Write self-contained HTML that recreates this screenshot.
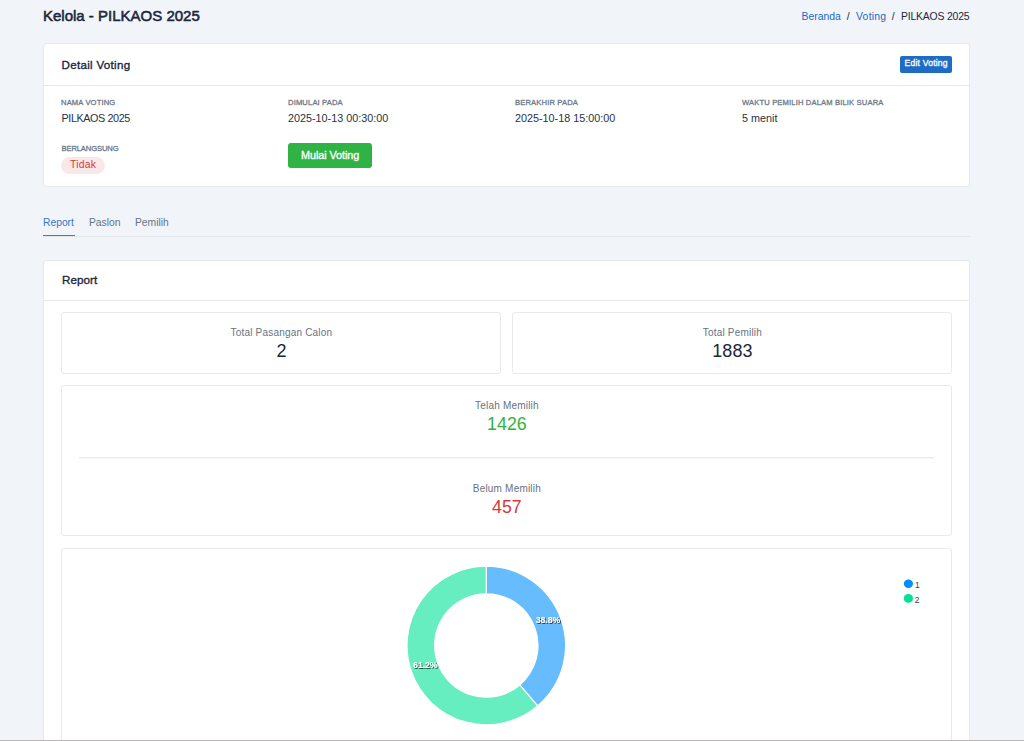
<!DOCTYPE html>
<html>
<head>
<meta charset="utf-8">
<style>
html,body{margin:0;padding:0;}
body{width:1024px;height:741px;overflow:hidden;background:#f1f4f9;font-family:"Liberation Sans",sans-serif;color:#1d273b;position:relative;}
.a{position:absolute;white-space:nowrap;line-height:1;}
.card{position:absolute;background:#fff;border:1px solid #e8e9ec;border-radius:3px;box-sizing:border-box;}
.hline{position:absolute;height:1px;background:#e9eaed;}
.dt{font-size:7.6px;font-weight:normal;-webkit-text-stroke:0.3px #6e7a8a;letter-spacing:0.15px;color:#6e7a8a;text-transform:uppercase;}
.dv{font-size:10.8px;color:#283244;}
.sub{font-size:10px;color:#667382;letter-spacing:0.2px;}
</style>
</head>
<body>
<!-- page header -->
<div class="a" style="left:43px;top:8.4px;font-size:15px;font-weight:normal;-webkit-text-stroke:0.55px #1d273b;color:#1d273b;letter-spacing:0px;">Kelola - PILKAOS 2025</div>
<div class="a" style="left:801.5px;top:12px;font-size:10.4px;color:#206bc4;">Beranda</div>
<div class="a" style="left:846.8px;top:12px;font-size:10.4px;color:#1d273b;">/</div>
<div class="a" style="left:856px;top:12px;font-size:10.4px;color:#206bc4;letter-spacing:0.25px;">Voting</div>
<div class="a" style="left:891.8px;top:12px;font-size:10.4px;color:#1d273b;">/</div>
<div class="a" style="left:901px;top:12px;font-size:10.4px;color:#1d273b;letter-spacing:-0.17px;">PILKAOS 2025</div>

<!-- Detail card -->
<div class="card" style="left:43px;top:43px;width:927px;height:144px;"></div>
<div class="hline" style="left:44px;top:85px;width:925px;"></div>
<div class="a" style="left:61.5px;top:59px;font-size:11.6px;font-weight:normal;-webkit-text-stroke:0.35px #1d273b;letter-spacing:0.3px;color:#1d273b;">Detail Voting</div>
<div class="a" style="left:900px;top:56px;width:52px;height:17px;background:#206bc4;border-radius:2px;"></div>
<div class="a" style="left:904.5px;top:59.3px;font-size:8.6px;font-weight:normal;-webkit-text-stroke:0.3px #fff;color:#fff;letter-spacing:0.2px;">Edit Voting</div>

<div class="a dt" style="left:61px;top:98.5px;">Nama Voting</div>
<div class="a dv" style="left:61.5px;top:112.5px;letter-spacing:-0.4px;">PILKAOS 2025</div>
<div class="a dt" style="left:288px;top:98.5px;">Dimulai Pada</div>
<div class="a dv" style="left:288px;top:112.6px;">2025-10-13 00:30:00</div>
<div class="a dt" style="left:515px;top:98.5px;">Berakhir Pada</div>
<div class="a dv" style="left:515px;top:112.6px;">2025-10-18 15:00:00</div>
<div class="a dt" style="left:742px;top:98.5px;">Waktu Pemilih Dalam Bilik Suara</div>
<div class="a dv" style="left:742px;top:112.6px;">5 menit</div>

<div class="a dt" style="left:61.5px;top:144.5px;letter-spacing:-0.12px;">Berlangsung</div>
<div class="a" style="left:61px;top:157px;width:44px;height:17px;border-radius:9px;background:#fae8e8;"></div>
<div class="a" style="left:70px;top:160.3px;font-size:10.4px;letter-spacing:0.2px;color:#d63939;">Tidak</div>

<div class="a" style="left:288px;top:143px;width:84px;height:25px;border-radius:3px;background:#2fb344;"></div>
<div class="a" style="left:301px;top:150.3px;font-size:10.8px;font-weight:normal;-webkit-text-stroke:0.35px #fff;color:#fff;letter-spacing:-0.05px;">Mulai Voting</div>

<!-- tabs -->
<div class="hline" style="left:43px;top:236px;width:927px;background:#e3e6ea;"></div>
<div class="a" style="left:43px;top:235px;width:32px;height:1px;background:#3a7dcf;"></div>
<div class="a" style="left:43px;top:218px;font-size:10.3px;color:#3377c9;">Report</div>
<div class="a" style="left:89px;top:218px;font-size:10.3px;color:#667382;">Paslon</div>
<div class="a" style="left:135px;top:218px;font-size:10.3px;color:#667382;">Pemilih</div>

<!-- report card -->
<div class="card" style="left:43px;top:260px;width:927px;height:490px;"></div>
<div class="hline" style="left:44px;top:300px;width:925px;"></div>
<div class="a" style="left:62px;top:274.4px;font-size:11.6px;font-weight:normal;-webkit-text-stroke:0.35px #1d273b;letter-spacing:0.1px;color:#1d273b;">Report</div>

<div class="card" style="left:61px;top:312px;width:440px;height:62px;"></div>
<div class="a sub" style="left:61.9px;width:439px;text-align:center;top:328px;">Total Pasangan Calon</div>
<div class="a" style="left:61.9px;width:439px;text-align:center;top:342px;font-size:18px;">2</div>

<div class="card" style="left:512px;top:312px;width:440px;height:62px;"></div>
<div class="a sub" style="left:512.9px;width:439px;text-align:center;top:328px;">Total Pemilih</div>
<div class="a" style="left:512.9px;width:439px;text-align:center;top:342px;font-size:18px;">1883</div>

<div class="card" style="left:61px;top:385px;width:891px;height:151px;"></div>
<div class="a sub" style="left:61.9px;width:890px;text-align:center;top:401px;">Telah Memilih</div>
<div class="a" style="left:61.9px;width:890px;text-align:center;top:415.5px;font-size:17.8px;color:#2fb344;">1426</div>
<div class="hline" style="left:79px;top:457px;width:855px;background:#eaebed;"></div>
<div class="hline" style="left:79px;top:458px;width:855px;background:#f7f7f8;"></div>
<div class="a sub" style="left:61.9px;width:890px;text-align:center;top:484px;">Belum Memilih</div>
<div class="a" style="left:61.9px;width:890px;text-align:center;top:498.5px;font-size:17.8px;color:#d63939;">457</div>

<div class="card" style="left:61px;top:548px;width:891px;height:220px;"></div>

<!-- donut -->
<svg class="a" style="left:0;top:0;" width="1024" height="741">
<defs><filter id="ds" x="-20%" y="-50%" width="140%" height="200%"><feDropShadow dx="0.8" dy="0.8" stdDeviation="0.7" flood-color="#000" flood-opacity="0.8"/></filter></defs>
<path d="M486.3,566.20 A79.3,79.3 0 0 1 537.61,705.96 L519.75,684.92 A51.7,51.7 0 0 0 486.3,593.80 Z" fill="#66bcfd" stroke="#fff" stroke-width="1.2"/>
<path d="M537.61,705.96 A79.3,79.3 0 1 1 486.3,566.20 L486.3,593.80 A51.7,51.7 0 1 0 519.75,684.92 Z" fill="#66eec0" stroke="#fff" stroke-width="1.2"/>
<text x="548" y="623.3" text-anchor="middle" font-family="Liberation Sans" font-weight="bold" font-size="8.7" fill="#fff" filter="url(#ds)" letter-spacing="-0.05">38.8%</text>
<text x="425.3" y="668" text-anchor="middle" font-family="Liberation Sans" font-weight="bold" font-size="8.7" fill="#fff" filter="url(#ds)" letter-spacing="-0.05">61.2%</text>
<ellipse cx="908.4" cy="583.8" rx="4.6" ry="4.2" fill="#008ffb"/>
<ellipse cx="908.4" cy="598.4" rx="4.6" ry="4.3" fill="#00e396"/>
<text x="915" y="587.7" font-family="Liberation Sans" font-size="8.4" fill="#373d3f">1</text>
<text x="914.8" y="602.7" font-family="Liberation Sans" font-size="8.4" fill="#373d3f">2</text>
</svg>

<div style="position:absolute;left:0;top:740px;width:1024px;height:1px;background:#bcb4b6;"></div>
</body>
</html>
